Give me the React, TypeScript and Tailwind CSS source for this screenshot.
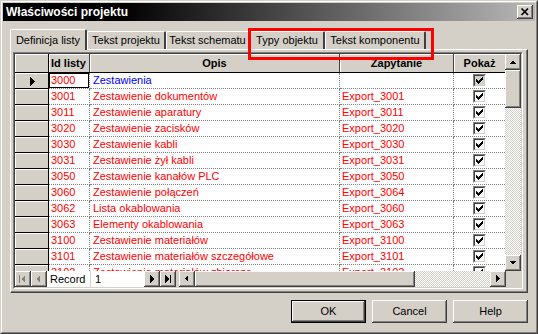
import React from 'react';

type Row = { id: string; opis: string; zap: string; blue?: boolean };

const rows: Row[] = [
  { id: '3000', opis: 'Zestawienia', zap: '', blue: true },
  { id: '3001', opis: 'Zestawienie dokumentów', zap: 'Export_3001' },
  { id: '3011', opis: 'Zestawienie aparatury', zap: 'Export_3011' },
  { id: '3020', opis: 'Zestawienie zacisków', zap: 'Export_3020' },
  { id: '3030', opis: 'Zestawienie kabli', zap: 'Export_3030' },
  { id: '3031', opis: 'Zestawienie żył kabli', zap: 'Export_3031' },
  { id: '3050', opis: 'Zestawienie kanałów PLC', zap: 'Export_3050' },
  { id: '3060', opis: 'Zestawienie połączeń', zap: 'Export_3064' },
  { id: '3062', opis: 'Lista okablowania', zap: 'Export_3060' },
  { id: '3063', opis: 'Elementy okablowania', zap: 'Export_3063' },
  { id: '3100', opis: 'Zestawienie materiałów', zap: 'Export_3100' },
  { id: '3101', opis: 'Zestawienie materiałów szczegółowe', zap: 'Export_3101' },
  { id: '3102', opis: 'Zestawienie materiałów zbiorcze', zap: 'Export_3102' },
];

// classic 3d bevels
const raised =
  'bg-[#d4d0c8] shadow-[inset_-1px_-1px_0_#404040,inset_1px_1px_0_#ffffff,inset_-2px_-2px_0_#808080,inset_2px_2px_0_#d4d0c8]';
const dither =
  'bg-[image:repeating-conic-gradient(#d4d0c8_0%_25%,#ffffff_0%_50%)] bg-[length:2px_2px]';
const dotted = 'border-dotted border-[#808080]';

function Tri({ dir, color = '#000' }: { dir: 'up' | 'down' | 'left' | 'right'; color?: string }) {
  const pts = {
    up: '4,10 11,10 7.5,6.5',
    down: '4,6 11,6 7.5,9.5',
    left: '9,4 9,11 5.5,7.5',
    right: '6,4 6,11 9.5,7.5',
  }[dir];
  return (
    <svg width="16" height="16" viewBox="0 0 16 16" shapeRendering="crispEdges">
      <polygon points={pts} fill={color} />
    </svg>
  );
}

function NavBtn({ kind, disabled }: { kind: 'first' | 'prev' | 'next' | 'last'; disabled?: boolean }) {
  const c = disabled ? '#808080' : '#000';
  return (
    <div className={`w-[16px] h-[16px] shrink-0 ${raised}`}>
      <svg width="16" height="16" viewBox="0 0 16 16" shapeRendering="crispEdges">
        {kind === 'first' && (
          <>
            <rect x="4" y="4" width="1" height="8" fill={c} />
            <polygon points="10,4 10,12 6,8" fill={c} />
          </>
        )}
        {kind === 'prev' && <polygon points="9,4 9,12 5,8" fill={c} />}
        {kind === 'next' && <polygon points="6,4 6,12 10,8" fill={c} />}
        {kind === 'last' && (
          <>
            <polygon points="5,4 5,12 9,8" fill={c} />
            <rect x="10" y="4" width="1" height="8" fill={c} />
          </>
        )}
      </svg>
    </div>
  );
}

function Check({ current }: { current?: boolean }) {
  return (
    <div className="w-[13px] h-[13px] border border-t-[#808080] border-l-[#808080] border-b-white border-r-white">
      <div
        className={`w-full h-full border border-t-[#404040] border-l-[#404040] border-b-[#d4d0c8] border-r-[#d4d0c8] ${
          current ? 'bg-[#d4d0c8]' : 'bg-white'
        }`}
      >
        <svg width="9" height="9" viewBox="0 0 9 9" shapeRendering="crispEdges">
          <path
            d="M7 1h1v1H7zM6 2h2v1H6zM1 3h1v1H1zM5 3h3v1H5zM1 4h2v1H1zM4 4h3v1H4zM1 5h5v1H1zM2 6h3v1H2zM3 7h1v1H3z"
            fill="#000"
          />
        </svg>
      </div>
    </div>
  );
}

function Tab({ label, width, active }: { label: string; width: string; active?: boolean }) {
  return (
    <div
      className={`${width} shrink-0 flex items-center justify-center bg-[#d4d0c8] border-t border-l border-white border-r-2 border-r-[#404040] rounded-t-[2px] ${
        active ? 'h-[21px] relative z-10 -mb-px border-r-[#404040]' : 'h-[18px]'
      }`}
    >
      <span className="leading-none">{label}</span>
    </div>
  );
}

export default function App() {
  return (
    <div
      className="relative w-[538px] h-[334px] text-[11px] text-black border border-t-[#d4d0c8] border-l-[#d4d0c8] border-r-[#404040] border-b-[#404040]"
      style={{ fontFamily: '"Liberation Sans", Arial, sans-serif' }}
    >
      <div className="w-full h-full border border-t-white border-l-white border-r-[#808080] border-b-[#808080] bg-[#d4d0c8] p-px flex flex-col">
        {/* title bar */}
        <div className="h-[18px] shrink-0 flex items-center justify-between pl-[3px] pr-[2px] bg-[image:linear-gradient(to_right,#000000_0%,#000000_22%,#b8b8b8_100%)]">
          <span className="text-white font-bold text-[12px]">Właściwości projektu</span>
          <div className={`w-[16px] h-[14px] ${raised} flex items-center justify-center`}>
            <svg width="16" height="14" viewBox="0 0 16 14">
              <path d="M4.5 3.5 L11 10 M11 3.5 L4.5 10" stroke="#000" strokeWidth="1.7" />
            </svg>
          </div>
        </div>

        {/* body */}
        <div className="flex-1 flex flex-col px-[7px] pt-[8px]">
          <div className="flex items-end h-[20px]">
            <Tab label="Definicja listy" width="w-[77px]" active />
            <Tab label="Tekst projektu" width="w-[79px]" />
            <Tab label="Tekst schematu" width="w-[84px]" />
            <Tab label="Typy objektu" width="w-[75px]" />
            <Tab label="Tekst komponentu" width="w-[101px]" />
          </div>

          {/* tab panel */}
          <div className="h-[244px] border-t border-l border-white border-r border-b border-r-[#404040] border-b-[#404040]">
            <div className="w-full h-full border-r border-b border-r-[#808080] border-b-[#808080] pl-[2px] pr-px pt-[2px] pb-px">
              {/* grid */}
              <div className="w-[510px] h-[237px] border border-t-[#808080] border-l-[#808080] border-b-white border-r-white">
                <div className="w-full h-full border border-t-[#404040] border-l-[#404040] border-b-[#d4d0c8] border-r-[#d4d0c8] bg-white flex flex-col">
                  <div className="flex h-[217px]">
                    <div className="w-[490px] flex flex-col">
                      {/* header */}
                      <div className="flex h-[19px] border-b border-black bg-[#d4d0c8] font-bold">
                        <div className="w-[34px] border-r border-black shadow-[inset_1px_1px_0_#ffffff]" />
                        <div className="w-[41px] border-r border-[#404040] shadow-[inset_1px_1px_0_#ffffff] pl-[2px] flex items-center">
                          Id listy
                        </div>
                        <div className="w-[250px] border-r border-[#404040] shadow-[inset_1px_1px_0_#ffffff] flex items-center justify-center">
                          Opis
                        </div>
                        <div className="w-[114px] border-r border-[#404040] shadow-[inset_1px_1px_0_#ffffff] flex items-center justify-center">
                          Zapytanie
                        </div>
                        <div className="w-[51px] shadow-[inset_1px_1px_0_#ffffff] flex items-center justify-center">
                          Pokaż
                        </div>
                      </div>
                      {/* rows */}
                      <div className="h-[198px] overflow-hidden">
                        {rows.map((r, i) => (
                          <div key={r.id} className="flex h-[16px] shrink-0 leading-[15px]">
                            <div className="w-[34px] shrink-0 bg-[#d4d0c8] border-r border-b border-black shadow-[inset_1px_1px_0_#ffffff] flex items-center justify-center">
                              {i === 0 && (
                                <svg width="8" height="10" viewBox="0 0 8 10" shapeRendering="crispEdges">
                                  <polygon points="2,1 2,10 7,5.5" fill="#000" />
                                </svg>
                              )}
                            </div>
                            <div
                              className={`w-[41px] shrink-0 border-r border-b ${dotted} pl-[2px] text-[#ff0000] ${
                                i === 0 ? 'shadow-[inset_0_0_0_1px_#000000]' : ''
                              }`}
                            >
                              {r.id}
                            </div>
                            <div
                              className={`w-[250px] shrink-0 border-r border-b ${dotted} pl-[3px] whitespace-nowrap overflow-hidden ${
                                r.blue ? 'text-[#0000ff]' : 'text-[#ff0000]'
                              }`}
                            >
                              {r.opis}
                            </div>
                            <div className={`w-[114px] shrink-0 border-r border-b ${dotted} pl-[2px] text-[#ff0000]`}>
                              {r.zap}
                            </div>
                            <div className={`w-[51px] shrink-0 border-b ${dotted} flex items-center justify-center`}>
                              <Check current={i === 0} />
                            </div>
                          </div>
                        ))}
                      </div>
                    </div>
                    {/* vertical scrollbar */}
                    <div className="w-[16px] flex flex-col">
                      <div className={`h-[16px] ${raised}`}>
                        <Tri dir="up" />
                      </div>
                      <div className={`h-[38px] ${raised}`} />
                      <div className={`flex-1 ${dither}`} />
                      <div className={`h-[16px] ${raised}`}>
                        <Tri dir="down" />
                      </div>
                    </div>
                  </div>

                  {/* navigation bar */}
                  <div className="flex h-[16px] bg-[#d4d0c8]">
                    <NavBtn kind="first" disabled />
                    <NavBtn kind="prev" disabled />
                    <div className="w-[44px] bg-white border-r border-[#d4d0c8] pl-[3px] leading-[16px]">Record</div>
                    <div className="w-[53px] bg-white pl-[4px] leading-[16px]">1</div>
                    <NavBtn kind="next" />
                    <NavBtn kind="last" />
                    <div className="w-[3px]" />
                    <div className={`w-[16px] ${raised}`}>
                      <Tri dir="left" />
                    </div>
                    <div className={`w-[220px] ${raised}`} />
                    <div className={`w-[75px] ${dither}`} />
                    <div className={`w-[16px] ${raised}`}>
                      <Tri dir="right" />
                    </div>
                    <div className="flex-1 bg-[#d4d0c8]" />
                  </div>
                </div>
              </div>
            </div>
          </div>

          {/* dialog buttons */}
          <div className="flex justify-end gap-[6px] pt-[7px]">
            <div className="w-[75px] h-[23px] border border-black">
              <div className={`w-full h-full ${raised} flex items-center justify-center`}>OK</div>
            </div>
            <div className={`w-[75px] h-[23px] ${raised} flex items-center justify-center`}>Cancel</div>
            <div className={`w-[75px] h-[23px] ${raised} flex items-center justify-center`}>Help</div>
          </div>
        </div>
      </div>

      {/* red highlight around the last two tabs */}
      <div className="absolute left-[247px] top-[27px] w-[186px] h-[32px] border-[3px] border-[#ff0000] pointer-events-none" />
    </div>
  );
}
